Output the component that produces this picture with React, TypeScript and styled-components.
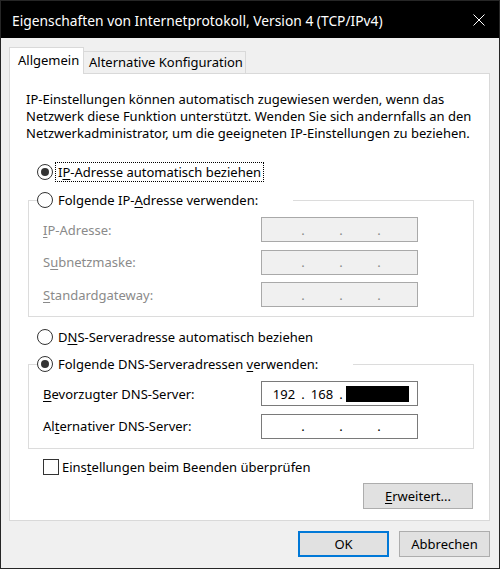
import React from 'react';
import styled, { createGlobalStyle } from 'styled-components';

const GlobalStyle = createGlobalStyle`
  html, body { margin: 0; padding: 0; background: #f0f0f0; }
  body { font-family: "Noto Sans", "Segoe UI", sans-serif; }
`;

const Window = styled.div`
  width: 500px;
  height: 569px;
  box-sizing: border-box;
  border: 1px solid #262626;
  background: #f0f0f0;
  display: flex;
  flex-direction: column;
  font-family: "Noto Sans", "Segoe UI", sans-serif;
  font-size: 13px;
  color: #000;
  overflow: hidden;
`;

const TitleBar = styled.div`
  height: 37px;
  flex: 0 0 auto;
  background: #000;
  display: flex;
  align-items: center;
  justify-content: space-between;
  padding-left: 11px;
`;

const Title = styled.div`
  color: #fff;
  font-size: 13.8px;
  line-height: 20px;
  margin-top: 2px;
  white-space: nowrap;
`;

const CloseBox = styled.div`
  width: 40px;
  height: 37px;
  display: flex;
  align-items: center;
  justify-content: center;
`;

const Body = styled.div`
  flex: 1 1 auto;
  display: flex;
  flex-direction: column;
  padding: 9px 9px 0 8px;
`;

const TabRow = styled.div`
  display: flex;
  align-items: flex-end;
  height: 27px;
  margin-bottom: -1px;
  position: relative;
  z-index: 1;
`;

const Tab = styled.div<{ $active?: boolean }>`
  box-sizing: border-box;
  display: flex;
  align-items: center;
  white-space: nowrap;
  border-top: 1px solid #d9d9d9;
  border-right: 1px solid #d9d9d9;
  border-left: ${p => (p.$active ? '1px solid #d9d9d9' : 'none')};
  background: ${p => (p.$active ? '#fff' : '#f0f0f0')};
  height: ${p => (p.$active ? '27px' : '22px')};
  margin-bottom: ${p => (p.$active ? '0' : '1px')};
  width: ${p => (p.$active ? '75px' : '162px')};
  padding: ${p => (p.$active ? '0 0 2px 8px' : '0 0 1px 5px')};
`;

const Panel = styled.div`
  box-sizing: border-box;
  height: 448px;
  flex: 0 0 auto;
  border: 1px solid #d9d9d9;
  background: #fff;
  display: flex;
  flex-direction: column;
  padding: 17px 15px 0 0;
`;

const Intro = styled.p`
  margin: 0 0 0 16px;
  line-height: 17px;
  white-space: nowrap;
`;

const Sections = styled.div`
  margin: 20px 0 0 18px;
  display: flex;
  flex-direction: column;
`;

const RadioRow = styled.div<{ $gap?: number }>`
  display: flex;
  align-items: center;
  height: 20px;
  padding-left: 9px;
  margin-top: ${p => p.$gap ?? 0}px;
`;

const RadioCircle = styled.span<{ $checked?: boolean }>`
  box-sizing: border-box;
  width: 16px;
  height: 16px;
  border: 1px solid #333;
  border-radius: 50%;
  background: #fff;
  display: flex;
  align-items: center;
  justify-content: center;
  flex: 0 0 auto;
  &::after {
    content: '';
    display: ${p => (p.$checked ? 'block' : 'none')};
    width: 8px;
    height: 8px;
    border-radius: 50%;
    background: #333;
  }
`;

const RadioText = styled.span<{ $focus?: boolean }>`
  margin-left: 3px;
  padding: 0 2px;
  line-height: 18px;
  white-space: nowrap;
  outline: ${p => (p.$focus ? '1px dotted #000' : 'none')};
`;

const Group = styled.fieldset<{ $gap?: number }>`
  margin: ${p => p.$gap ?? 0}px 0 0 0;
  border: 1px solid #dcdcdc;
  padding: 7px 0 9px 0;
  min-width: 0;
`;

const Legend = styled.legend`
  display: flex;
  align-items: center;
  height: 20px;
  padding: 0 33px 0 0;
  margin-left: 8px;
`;

const Fields = styled.div`
  display: grid;
  grid-template-columns: 218px 157px;
  row-gap: 7.5px;
  align-items: center;
  margin-left: 14px;
`;

const FieldLabel = styled.span<{ $disabled?: boolean }>`
  color: ${p => (p.$disabled ? '#8a8a8a' : '#000')};
  white-space: nowrap;
`;

const IpField = styled.div<{ $disabled?: boolean }>`
  box-sizing: border-box;
  width: 157px;
  height: 25px;
  border: 1px solid ${p => (p.$disabled ? '#a9a9a9' : '#7a7a7a')};
  background: ${p => (p.$disabled ? '#f0f0f0' : '#fff')};
  color: ${p => (p.$disabled ? '#8a8a8a' : '#000')};
  display: flex;
  align-items: center;
  padding-left: 6px;
`;

const Octet = styled.span`
  width: 32px;
  text-align: center;
`;

const Dot = styled.span`
  width: 6px;
  text-align: center;
`;

const Redacted = styled.span`
  display: inline-block;
  width: 63px;
  height: 16px;
  margin-left: 2px;
  background: #000;
`;

const CheckRow = styled.label`
  display: flex;
  align-items: center;
  height: 20px;
  padding-left: 15px;
  margin-top: 8px;
`;

const CheckBox = styled.span`
  box-sizing: border-box;
  width: 16px;
  height: 16px;
  border: 1px solid #333;
  background: #fff;
  flex: 0 0 auto;
`;

const CheckText = styled.span`
  margin-left: 3px;
  white-space: nowrap;
`;

const Button = styled.button<{ $default?: boolean; $w?: number }>`
  box-sizing: border-box;
  width: ${p => p.$w ?? 91}px;
  height: 26px;
  font: inherit;
  color: #000;
  background: #e1e1e1;
  border: 1px solid ${p => (p.$default ? '#0078d7' : '#adadad')};
  box-shadow: ${p => (p.$default ? 'inset 0 0 0 1px #0078d7' : 'none')};
  padding: 0;
  display: flex;
  align-items: center;
  justify-content: center;
`;

const AdvancedRow = styled.div`
  display: flex;
  justify-content: flex-end;
  margin-top: 6px;
  padding-right: 1px;
`;

const Footer = styled.div`
  display: flex;
  justify-content: flex-end;
  gap: 10px;
  margin-top: 10px;
`;

const Key = styled.span`
  text-decoration: underline;
  text-underline-offset: 2px;
`;

const CloseIcon = () => (
  <svg width="12" height="12" viewBox="0 0 12 12">
    <path d="M0.5 0.5 L11.5 11.5 M11.5 0.5 L0.5 11.5" stroke="#fff" strokeWidth="1" fill="none" />
  </svg>
);

type IpProps = { disabled?: boolean; values?: string[]; redact?: boolean };

const IpInput = ({ disabled, values = ['', '', '', ''], redact }: IpProps) => (
  <IpField $disabled={disabled}>
    <Octet>{values[0]}</Octet>
    <Dot>.</Dot>
    <Octet>{values[1]}</Octet>
    <Dot>.</Dot>
    {redact ? (
      <Redacted />
    ) : (
      <>
        <Octet>{values[2]}</Octet>
        <Dot>.</Dot>
        <Octet>{values[3]}</Octet>
      </>
    )}
  </IpField>
);

export default function App() {
  return (
    <>
      <GlobalStyle />
      <Window>
        <TitleBar>
          <Title>Eigenschaften von Internetprotokoll, Version 4 (TCP/IPv4)</Title>
          <CloseBox>
            <CloseIcon />
          </CloseBox>
        </TitleBar>
        <Body>
          <TabRow>
            <Tab $active>Allgemein</Tab>
            <Tab>Alternative Konfiguration</Tab>
          </TabRow>
          <Panel>
            <Intro>
              IP-Einstellungen können automatisch zugewiesen werden, wenn das
              <br />
              Netzwerk diese Funktion unterstützt. Wenden Sie sich andernfalls an den
              <br />
              Netzwerkadministrator, um die geeigneten IP-Einstellungen zu beziehen.
            </Intro>
            <Sections>
              <RadioRow>
                <RadioCircle $checked />
                <RadioText $focus>
                  I<Key>P</Key>-Adresse automatisch beziehen
                </RadioText>
              </RadioRow>
              <Group $gap={8}>
                <Legend>
                  <RadioCircle />
                  <RadioText>
                    Folgende IP-<Key>A</Key>dresse verwenden:
                  </RadioText>
                </Legend>
                <Fields>
                  <FieldLabel $disabled>
                    <Key>I</Key>P-Adresse:
                  </FieldLabel>
                  <IpInput disabled />
                  <FieldLabel $disabled>
                    S<Key>u</Key>bnetzmaske:
                  </FieldLabel>
                  <IpInput disabled />
                  <FieldLabel $disabled>
                    <Key>S</Key>tandardgateway:
                  </FieldLabel>
                  <IpInput disabled />
                </Fields>
              </Group>
              <RadioRow $gap={10}>
                <RadioCircle />
                <RadioText>
                  D<Key>N</Key>S-Serveradresse automatisch beziehen
                </RadioText>
              </RadioRow>
              <Group $gap={7}>
                <Legend>
                  <RadioCircle $checked />
                  <RadioText>
                    Folgende DNS-Serveradressen <Key>v</Key>erwenden:
                  </RadioText>
                </Legend>
                <Fields>
                  <FieldLabel>
                    <Key>B</Key>evorzugter DNS-Server:
                  </FieldLabel>
                  <IpInput values={['192', '168', '', '']} redact />
                  <FieldLabel>
                    Al<Key>t</Key>ernativer DNS-Server:
                  </FieldLabel>
                  <IpInput />
                </Fields>
              </Group>
              <CheckRow>
                <CheckBox />
                <CheckText>
                  Eins<Key>t</Key>ellungen beim Beenden überprüfen
                </CheckText>
              </CheckRow>
              <AdvancedRow>
                <Button $w={110}>
                  <Key>E</Key>rweitert...
                </Button>
              </AdvancedRow>
            </Sections>
          </Panel>
          <Footer>
            <Button $default>OK</Button>
            <Button>Abbrechen</Button>
          </Footer>
        </Body>
      </Window>
    </>
  );
}
